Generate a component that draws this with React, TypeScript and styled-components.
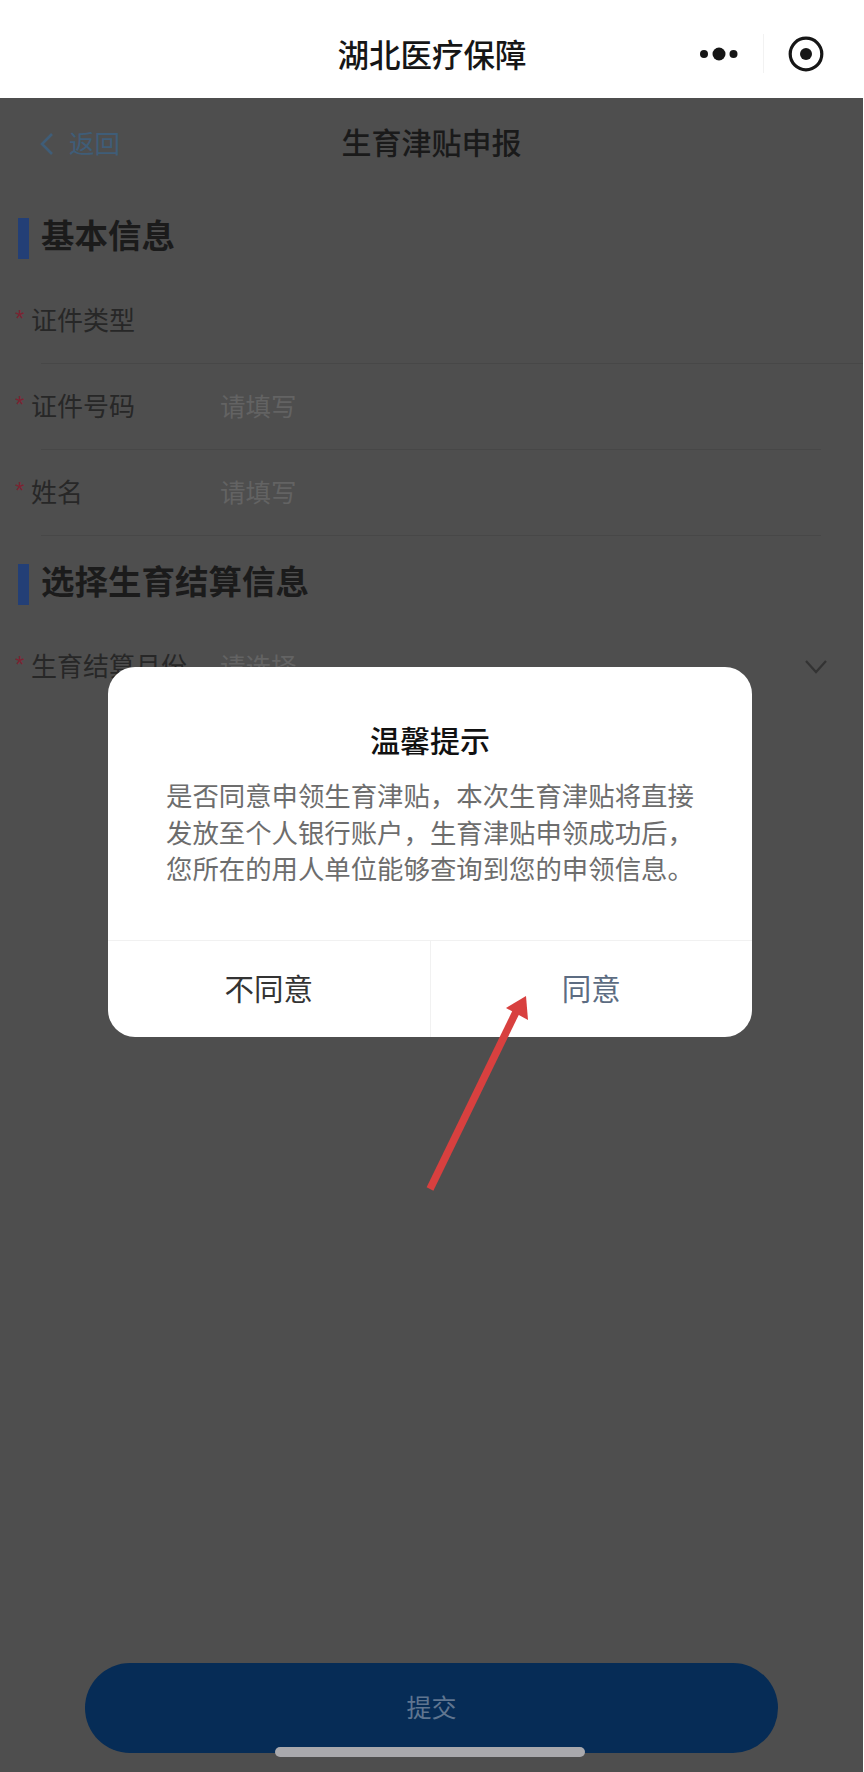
import React from "react";
import styled, { createGlobalStyle } from "styled-components";

const GlobalStyle = createGlobalStyle`
  html, body {
    background: #ffffff;
    margin: 0;
    padding: 0;
  }
  body {
    font-family: "Noto Sans CJK SC", "Noto Sans", sans-serif;
  }
`;

const Page = styled.div`
  display: flex;
  flex-direction: column;
  height: 1772px;
  overflow: hidden;
  position: relative;
  width: 864px;
`;

const NavBar = styled.header`
  align-items: center;
  background: #ffffff;
  box-sizing: border-box;
  display: grid;
  flex: none;
  grid-template-columns: 1fr auto 1fr;
  height: 98px;
  padding-top: 8px;
`;

const NavTitle = styled.h1`
  color: #161616;
  font-size: 31.5px;
  font-weight: 500;
  grid-column: 2;
  margin: 0;
`;

const Capsule = styled.div`
  align-items: center;
  display: flex;
  grid-column: 3;
  justify-content: flex-end;
  margin-top: 1px;
  padding-right: 40px;
`;

const CapsuleDivider = styled.span`
  background: #f2f2f2;
  height: 39px;
  margin: 0 24px 0 21px;
  width: 1px;
`;

const Content = styled.main`
  background: #4e4e4e;
  display: flex;
  flex: 1;
  flex-direction: column;
  margin-right: 1px;
`;

const TopBar = styled.div`
  align-items: center;
  box-sizing: border-box;
  display: grid;
  flex: none;
  grid-template-columns: 1fr auto 1fr;
  height: 92px;
  padding-bottom: 6px;
`;

const BackLink = styled.div`
  align-items: center;
  color: #3f5d78;
  display: flex;
  font-size: 25.5px;
  gap: 15px;
  padding-left: 39px;
`;

const BackIcon = styled.svg`
  margin-top: 6px;
`;

const PageTitle = styled.h2`
  color: #1a1a1a;
  font-size: 30px;
  font-weight: 500;
  margin: 0;
`;

const SectionHead = styled.div`
  align-items: center;
  display: flex;
  gap: 12px;
  height: 41px;
  margin: 28px 0 19px 18px;
`;

const SectionBar = styled.span`
  align-self: stretch;
  background: #233f76;
  width: 11px;
`;

const SectionTitle = styled.h3`
  color: #1b1b1b;
  font-size: 33.5px;
  font-weight: 700;
  margin: 0 0 11px;
`;

const Row = styled.div`
  align-items: center;
  box-sizing: border-box;
  display: flex;
  height: 85px;
  padding: 0 0 5px 15px;
`;

const Label = styled.div`
  align-items: center;
  color: #272727;
  display: flex;
  flex: none;
  font-size: 26px;
  width: 205px;
`;

const Star = styled.span`
  align-self: flex-start;
  color: #7a2432;
  font-family: "Liberation Sans", sans-serif;
  font-size: 24px;
  line-height: 26px;
  margin-top: 6px;
  width: 16px;
`;

const Placeholder = styled.span`
  color: #636363;
  flex: 1;
  font-size: 25.5px;
`;

const Chevron = styled.svg`
  flex: none;
  margin: 6px 35px 0 0;
`;

const Divider = styled.div<{ $flush?: boolean }>`
  background: #474747;
  height: 1px;
  margin: 0 ${(p) => (p.$flush ? "0" : "42px")} 0 41px;
`;

const SubmitWrap = styled.div`
  display: flex;
  justify-content: center;
  margin-top: auto;
  padding-bottom: 19px;
`;

const SubmitButton = styled.button`
  background: #062c56;
  border: none;
  border-radius: 45px;
  color: #5f7590;
  font-family: inherit;
  font-size: 25px;
  height: 90px;
  padding: 0 0 4px;
  width: 693px;
`;

const HomeIndicator = styled.div`
  background: #a9a9ad;
  border-radius: 5px;
  bottom: 15px;
  height: 10px;
  left: 275px;
  position: absolute;
  width: 310px;
`;

const Dialog = styled.div`
  background: #ffffff;
  border-radius: 27px;
  display: flex;
  flex-direction: column;
  height: 370px;
  left: 108px;
  position: absolute;
  top: 667px;
  width: 644px;
`;

const DialogTitle = styled.div`
  color: #111111;
  font-size: 30px;
  font-weight: 500;
  line-height: 40px;
  margin-top: 52px;
  text-align: center;
`;

const DialogText = styled.p`
  color: #6d6d6d;
  font-size: 26.4px;
  line-height: 36.5px;
  margin: 18px 0 0 58px;
  white-space: nowrap;
`;

const DialogActions = styled.div`
  border-top: 1px solid #f1f1f1;
  display: flex;
  height: 96px;
  margin-top: auto;
`;

const DialogAction = styled.div<{ $primary?: boolean }>`
  align-items: center;
  border-left: ${(p) => (p.$primary ? "1px solid #f1f1f1" : "none")};
  box-sizing: border-box;
  color: ${(p) => (p.$primary ? "#5c6c82" : "#333333")};
  display: flex;
  flex: 1;
  font-size: 29.5px;
  justify-content: center;
  padding-bottom: 4px;
`;

const ArrowMark = styled.svg`
  left: 420px;
  pointer-events: none;
  position: absolute;
  top: 990px;
`;

function FormRow({ label, hint, select }: { label: string; hint?: string; select?: boolean }) {
  return (
    <Row>
      <Label>
        <Star>*</Star>
        {label}
      </Label>
      <Placeholder>{hint}</Placeholder>
      {select && (
        <Chevron width="24" height="16" viewBox="0 0 24 16" fill="none">
          <path d="M2 2l10 11L22 2" stroke="#333333" strokeWidth="2.2" />
        </Chevron>
      )}
    </Row>
  );
}

function App() {
  return (
    <Page lang="zh-CN">
      <GlobalStyle />
      <NavBar>
        <NavTitle>湖北医疗保障</NavTitle>
        <Capsule>
          <svg width="42" height="16" viewBox="0 0 42 16">
            <circle cx="4" cy="8" r="4" fill="#161616" />
            <circle cx="19" cy="8" r="6.5" fill="#161616" />
            <circle cx="33.5" cy="8" r="4" fill="#161616" />
          </svg>
          <CapsuleDivider />
          <svg width="36" height="36" viewBox="0 0 36 36">
            <circle cx="18" cy="18" r="15.8" fill="none" stroke="#161616" strokeWidth="3.2" />
            <circle cx="18" cy="18" r="6" fill="#161616" />
          </svg>
        </Capsule>
      </NavBar>
      <Content>
        <TopBar>
          <BackLink>
            <BackIcon width="15" height="24" viewBox="0 0 15 24" fill="none">
              <path d="M13 2L3 12l10 10" stroke="#3f5d78" strokeWidth="2.6" />
            </BackIcon>
            返回
          </BackLink>
          <PageTitle>生育津贴申报</PageTitle>
        </TopBar>

        <SectionHead>
          <SectionBar />
          <SectionTitle>基本信息</SectionTitle>
        </SectionHead>
        <FormRow label="证件类型" />
        <Divider $flush />
        <FormRow label="证件号码" hint="请填写" />
        <Divider />
        <FormRow label="姓名" hint="请填写" />
        <Divider />

        <SectionHead>
          <SectionBar />
          <SectionTitle>选择生育结算信息</SectionTitle>
        </SectionHead>
        <FormRow label="生育结算月份" hint="请选择" select />

        <SubmitWrap>
          <SubmitButton>提交</SubmitButton>
        </SubmitWrap>
      </Content>

      <HomeIndicator />

      <Dialog>
        <DialogTitle>温馨提示</DialogTitle>
        <DialogText>
          是否同意申领生育津贴，本次生育津贴将直接
          <br />
          发放至个人银行账户，生育津贴申领成功后，
          <br />
          您所在的用人单位能够查询到您的申领信息。
        </DialogText>
        <DialogActions>
          <DialogAction>不同意</DialogAction>
          <DialogAction $primary>同意</DialogAction>
        </DialogActions>
      </Dialog>

      <ArrowMark width="120" height="204" viewBox="0 0 120 204">
        <line x1="10" y1="199" x2="96" y2="22" stroke="#d8403f" strokeWidth="7.5" />
        <polygon points="106,6 86,18 108,30" fill="#d8403f" />
      </ArrowMark>
    </Page>
  );
}

export default App;
